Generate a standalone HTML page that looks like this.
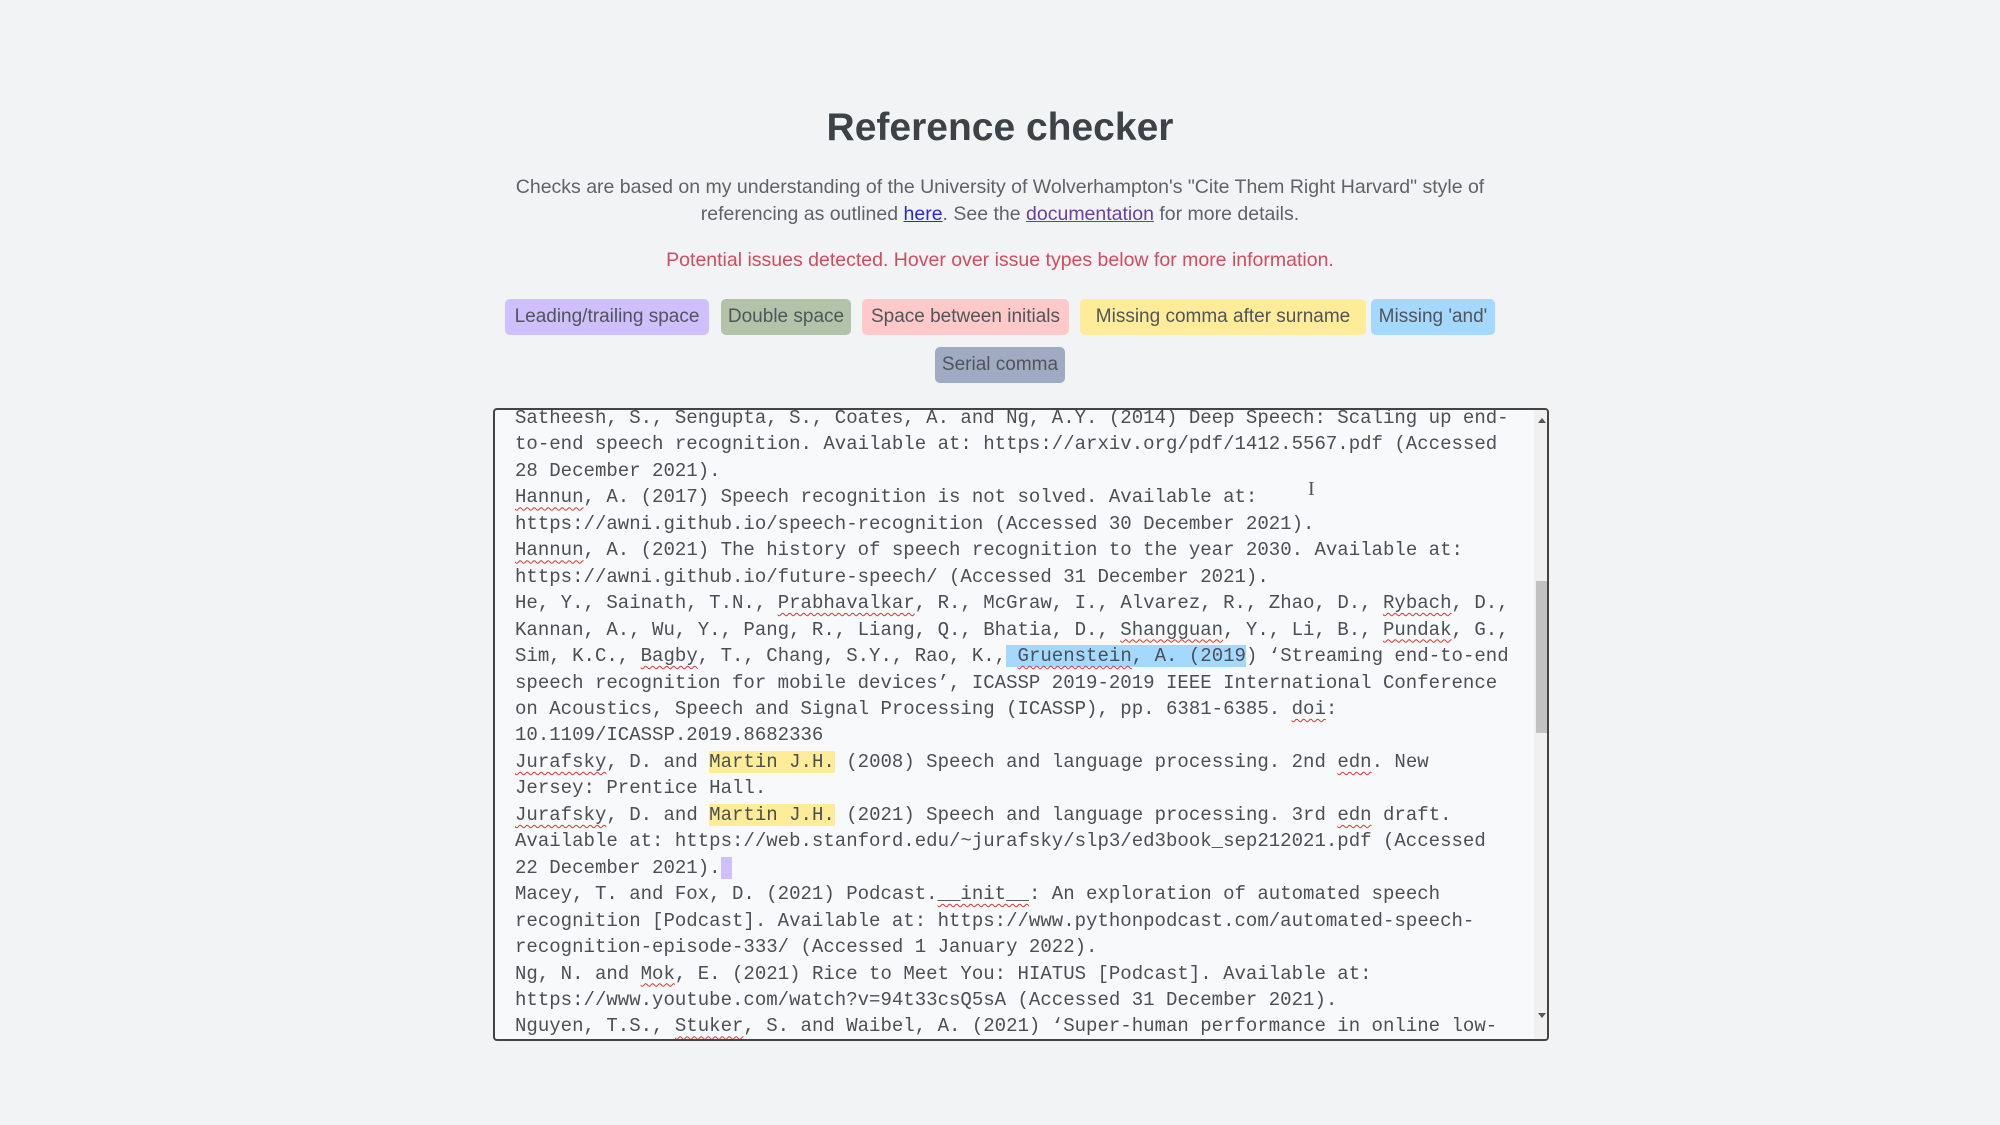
<!DOCTYPE html>
<html><head><meta charset="utf-8">
<style>
html,body{margin:0;padding:0;}
body{width:2000px;height:1125px;background:#f1f3f5;position:relative;overflow:hidden;font-family:"Liberation Sans",sans-serif;}
h1{position:absolute;left:0;width:2000px;top:104px;margin:0;text-align:center;font-size:39px;font-weight:bold;color:#3d4247;line-height:48px;}
.p{position:absolute;left:0;width:2000px;text-align:center;font-size:19.5px;color:#5f6368;line-height:27px;}
.p a{color:#2a2ad0;text-decoration:underline;}
.p a.v{color:#6a3fa0;}
.red{color:#d24b5e;}
.b{position:absolute;top:299px;height:36px;line-height:36px;border-radius:5px;font-size:19px;color:#50555a;text-align:center;}
.ta{position:absolute;left:493px;top:408px;width:1056px;height:633px;border:2px solid #444;border-radius:4px;background:#f8f9fa;overflow:hidden;box-sizing:border-box;}
.txt{position:absolute;left:20px;top:-5px;font-family:"Liberation Mono",monospace;font-size:19.05px;line-height:26.45px;color:#4a4f54;white-space:pre;}
.s{text-decoration:underline wavy #d33;text-decoration-thickness:1px;text-underline-offset:4px;}
.hb{background:#a5d8ff;}
.hy{background:#ffec99;}
.sb{position:absolute;left:1039px;top:0;width:16px;height:631px;background:#f0f0f0;}
.th{position:absolute;left:2px;top:171px;width:12px;height:152px;background:#c1c1c1;}
</style></head><body>
<h1>Reference checker</h1>
<div class="p" style="top:174px">Checks are based on my understanding of the University of Wolverhampton's "Cite Them Right Harvard" style of</div>
<div class="p" style="top:201px">referencing as outlined <a>here</a>. See the <a class="v">documentation</a> for more details.</div>
<div class="p red" style="top:247px">Potential issues detected. Hover over issue types below for more information.</div>
<div class="b" style="left:505px;width:204px;background:#d0bfff">Leading/trailing space</div>
<div class="b" style="left:721px;width:130px;background:#b2c3a9">Double space</div>
<div class="b" style="left:862px;width:207px;background:#ffc9c9">Space between initials</div>
<div class="b" style="left:1080px;width:286px;background:#ffec99">Missing comma after surname</div>
<div class="b" style="left:1371px;width:124px;background:#a5d8ff">Missing 'and'</div>
<div class="b" style="left:935px;width:130px;top:347px;background:#a0aac3">Serial comma</div>
<div class="ta">
<div class="txt">Satheesh, S., Sengupta, S., Coates, A. and Ng, A.Y. (2014) Deep Speech: Scaling up end-
to-end speech recognition. Available at: https://arxiv.org/pdf/1412.5567.pdf (Accessed
28 December 2021).
<span class="s">Hannun</span>, A. (2017) Speech recognition is not solved. Available at:
https://awni.github.io/speech-recognition (Accessed 30 December 2021).
<span class="s">Hannun</span>, A. (2021) The history of speech recognition to the year 2030. Available at:
https://awni.github.io/future-speech/ (Accessed 31 December 2021).
He, Y., Sainath, T.N., <span class="s">Prabhavalkar</span>, R., McGraw, I., Alvarez, R., Zhao, D., <span class="s">Rybach</span>, D.,
Kannan, A., Wu, Y., Pang, R., Liang, Q., Bhatia, D., <span class="s">Shangguan</span>, Y., Li, B., <span class="s">Pundak</span>, G.,
Sim, K.C., <span class="s">Bagby</span>, T., Chang, S.Y., Rao, K.,<span class="hb"> <span class="s">Gruenstein</span>, A. (2019</span>) ‘Streaming end-to-end
speech recognition for mobile devices’, ICASSP 2019-2019 IEEE International Conference
on Acoustics, Speech and Signal Processing (ICASSP), pp. 6381-6385. <span class="s">doi</span>:
10.1109/ICASSP.2019.8682336
<span class="s">Jurafsky</span>, D. and <span class="hy">Martin J.H.</span> (2008) Speech and language processing. 2nd <span class="s">edn</span>. New
Jersey: Prentice Hall.
<span class="s">Jurafsky</span>, D. and <span class="hy">Martin J.H.</span> (2021) Speech and language processing. 3rd <span class="s">edn</span> draft.
Available at: https://web.stanford.edu/~jurafsky/slp3/ed3book_sep212021.pdf (Accessed
22 December 2021).<span style="background:#d0bfff"> </span>
Macey, T. and Fox, D. (2021) Podcast.<span class="s">__init__</span>: An exploration of automated speech
recognition [Podcast]. Available at: https://www.pythonpodcast.com/automated-speech-
recognition-episode-333/ (Accessed 1 January 2022).
Ng, N. and <span class="s">Mok</span>, E. (2021) Rice to Meet You: HIATUS [Podcast]. Available at:
https://www.youtube.com/watch?v=94t33csQ5sA (Accessed 31 December 2021).
Nguyen, T.S., <span class="s">Stuker</span>, S. and Waibel, A. (2021) ‘Super-human performance in online low-</div>
<div class="sb"><div style="position:absolute;left:4px;top:8px;border:4px solid transparent;border-bottom:5px solid #555;border-top:0"></div><div class="th"></div><div style="position:absolute;left:4px;top:603px;border:4px solid transparent;border-top:5px solid #555;border-bottom:0"></div></div>
</div>
<div style="position:absolute;left:1308px;top:478px;font-family:'Liberation Serif',serif;font-size:20px;color:#555">I</div>
</body></html>
